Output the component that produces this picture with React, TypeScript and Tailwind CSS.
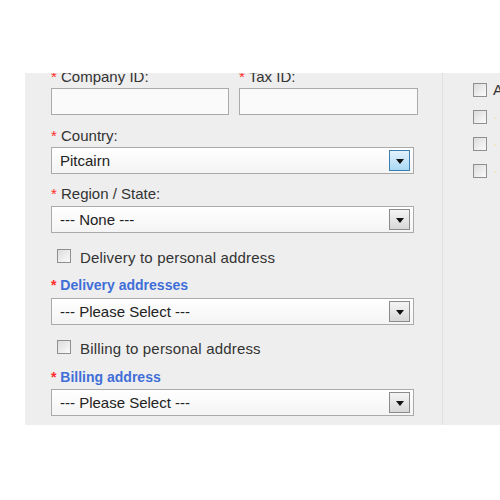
import React from "react";

const font = { fontFamily: '"Liberation Sans", Arial, sans-serif' };

function Label({ text, blue = false }: { text: string; blue?: boolean }) {
  return (
    <div
      className={
        blue
          ? "h-[16px] leading-[16px] text-[14px] font-bold text-[#3f6ed8] whitespace-nowrap"
          : "h-[17px] leading-[17px] text-[15px] text-[#333] whitespace-nowrap"
      }
    >
      <span className="text-[#ff2a2a]">*</span> {text}
    </div>
  );
}

function Select({ value, active = false }: { value: string; active?: boolean }) {
  return (
    <div className="w-[363px] h-[27px] border border-[#aaaaaa] bg-gradient-to-b from-[#ffffff] to-[#f4f4f4] flex items-center justify-between pl-[8px] pr-[3px]">
      <span className="text-[15px] text-[#222] leading-[17px]">{value}</span>
      <div
        className={
          active
            ? "w-[21px] h-[21px] border border-[#3c7fb1] bg-gradient-to-b from-[#e3f3fc] to-[#a9d8f4] flex items-center justify-center"
            : "w-[21px] h-[21px] border border-[#8a8a8a] bg-gradient-to-b from-[#f4f4f4] to-[#d8d8d8] flex items-center justify-center"
        }
      >
        <svg width="8" height="5" viewBox="0 0 8 5" className="mt-[2px]">
          <polygon points="0,0 8,0 4,5" fill="#111" />
        </svg>
      </div>
    </div>
  );
}

function Check() {
  return (
    <div className="w-[14px] h-[14px] border border-[#8f8f8f] bg-gradient-to-br from-[#dcdcdc] to-[#fbfbfb] shrink-0" />
  );
}

export default function App() {
  return (
    <div className="w-[500px] h-[500px] bg-white overflow-hidden" style={font}>
      <div className="ml-[25px] mt-[73px] h-[352px] bg-[#eeeeee] flex overflow-hidden">
        <div className="w-[417px] pl-[26px] shrink-0">
          <div className="flex gap-[10px] mt-[-5px]">
            <div className="w-[178px]">
              <Label text="Company ID:" />
              <div className="mt-[3px] w-[178px] h-[27px] border border-[#aaaaaa] bg-[#fafafa]" />
            </div>
            <div className="w-[179px]">
              <Label text="Tax ID:" />
              <div className="mt-[3px] w-[179px] h-[27px] border border-[#aaaaaa] bg-[#fafafa]" />
            </div>
          </div>
          <div className="mt-[12px]">
            <Label text="Country:" />
          </div>
          <div className="mt-[3px]">
            <Select value="Pitcairn" active />
          </div>
          <div className="mt-[11px]">
            <Label text="Region / State:" />
          </div>
          <div className="mt-[4px]">
            <Select value="--- None ---" />
          </div>
          <div className="mt-[15px] flex items-center ml-[6px] h-[16px]">
            <Check />
            <span className="ml-[9px] text-[15px] text-[#333] leading-[17px] mt-[2px] tracking-[0.18px]">
              Delivery to personal address
            </span>
          </div>
          <div className="mt-[13px]">
            <Label text="Delivery addresses" blue />
          </div>
          <div className="mt-[5px]">
            <Select value="--- Please Select ---" />
          </div>
          <div className="mt-[14px] flex items-center ml-[6px] h-[16px]">
            <Check />
            <span className="ml-[9px] text-[15px] text-[#333] leading-[17px] mt-[2px] tracking-[0.18px]">
              Billing to personal address
            </span>
          </div>
          <div className="mt-[14px]">
            <Label text="Billing address" blue />
          </div>
          <div className="mt-[4px]">
            <Select value="--- Please Select ---" />
          </div>
        </div>
        <div className="w-[1px] bg-[#e0e0e0] shrink-0" />
        <div className="pl-[30px] pt-[10px] flex flex-col gap-[13px]">
          <div className="flex items-center gap-[6px] h-[14px]">
            <Check />
            <span className="text-[15px] text-[#333]">A</span>
          </div>
          <div className="flex items-center gap-[6px] h-[14px]">
            <Check />
            <span className="text-[15px] text-[#f3e3b0]">·</span>
          </div>
          <div className="flex items-center gap-[6px] h-[14px]">
            <Check />
            <span className="text-[15px] text-[#f3e3b0]">·</span>
          </div>
          <div className="flex items-center gap-[6px] h-[14px]">
            <Check />
            <span className="text-[15px] text-[#f3e3b0]">·</span>
          </div>
        </div>
      </div>
    </div>
  );
}
